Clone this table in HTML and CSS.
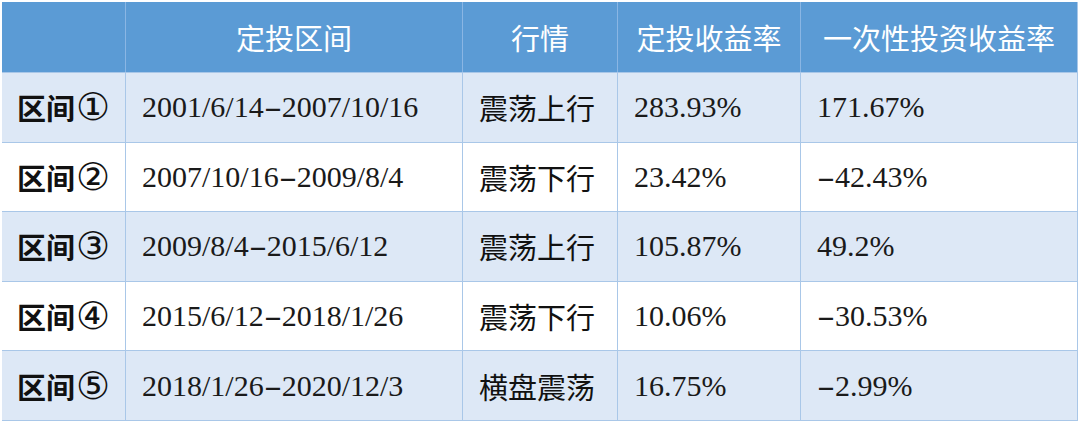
FILE: index.html
```html
<!DOCTYPE html>
<html lang="zh">
<head>
<meta charset="utf-8">
<link rel="stylesheet" href="styles.css">
</head>
<body>
<div class="table">
  <div class="cell head"></div>
  <div class="cell head">定投区间</div>
  <div class="cell head">行情</div>
  <div class="cell head">定投收益率</div>
  <div class="cell head">一次性投资收益率</div>

  <div class="cell label alt">区间<span class="circ">①</span></div>
  <div class="cell num alt">2001/6/14<span class="dash">-</span>2007/10/16</div>
  <div class="cell cn alt">震荡上行</div>
  <div class="cell num alt">283.93%</div>
  <div class="cell num alt">171.67%</div>

  <div class="cell label">区间<span class="circ">②</span></div>
  <div class="cell num">2007/10/16<span class="dash">-</span>2009/8/4</div>
  <div class="cell cn">震荡下行</div>
  <div class="cell num">23.42%</div>
  <div class="cell num"><span class="dash">-</span>42.43%</div>

  <div class="cell label alt">区间<span class="circ">③</span></div>
  <div class="cell num alt">2009/8/4<span class="dash">-</span>2015/6/12</div>
  <div class="cell cn alt">震荡上行</div>
  <div class="cell num alt">105.87%</div>
  <div class="cell num alt">49.2%</div>

  <div class="cell label">区间<span class="circ">④</span></div>
  <div class="cell num">2015/6/12<span class="dash">-</span>2018/1/26</div>
  <div class="cell cn">震荡下行</div>
  <div class="cell num">10.06%</div>
  <div class="cell num"><span class="dash">-</span>30.53%</div>

  <div class="cell label alt">区间<span class="circ">⑤</span></div>
  <div class="cell num alt">2018/1/26<span class="dash">-</span>2020/12/3</div>
  <div class="cell cn alt">横盘震荡</div>
  <div class="cell num alt">16.75%</div>
  <div class="cell num alt"><span class="dash">-</span>2.99%</div>
</div>
</body>
</html>
```
FILE: styles.css
```css
html, body {
  margin: 0;
  padding: 0;
  background: #ffffff;
}
body {
  padding: 2px 0 0 2px;
  width: 1080px;
  height: 422px;
  box-sizing: border-box;
  overflow: hidden;
}
.table {
  display: grid;
  grid-template-columns: 123px 337px 155px 183px 277px;
  grid-template-rows: 70px repeat(5, 69.6px);
  width: 1075px;
  border-right: 1px solid #a9c7e8;
  border-bottom: 1px solid #a9c7e8;
  box-sizing: content-box;
}
.cell {
  display: flex;
  align-items: center;
  box-sizing: border-box;
  border-left: 1px solid #a9c7e8;
  border-top: 1px solid #a9c7e8;
  padding-left: 16px;
  color: #111111;
  font-size: 29px;
  white-space: nowrap;
  background: #ffffff;
}
.cell.alt {
  background: #dde8f6;
}
.cell.head {
  background: #5b9bd5;
  color: #ffffff;
  justify-content: center;
  padding-left: 0;
  font-family: "Noto Sans CJK SC", sans-serif;
  font-size: 29px;
  border-top: none;
  border-left: 1px solid #8ab6e4;
}
.cell.head:first-child {
  border-left: none;
}
.cell.label {
  justify-content: center;
  padding-left: 0;
  font-family: "Noto Sans CJK SC", sans-serif;
  font-weight: bold;
  font-size: 29px;
  border-left: none;
}
.circ {
  font-family: "DejaVu Sans", sans-serif;
  font-weight: normal;
  font-size: 38px;
  line-height: 1;
  margin-left: 1px;
}
.cell.num {
  font-family: "Liberation Serif", "Noto Sans CJK SC", serif;
  font-size: 30px;
  color: #1a1a1a;
}
.dash {
  display: inline-block;
  transform: scaleX(1.8);
  margin: 0 4px;
}
.cell.cn {
  font-family: "Noto Sans CJK SC", sans-serif;
  font-size: 29px;
}
```
